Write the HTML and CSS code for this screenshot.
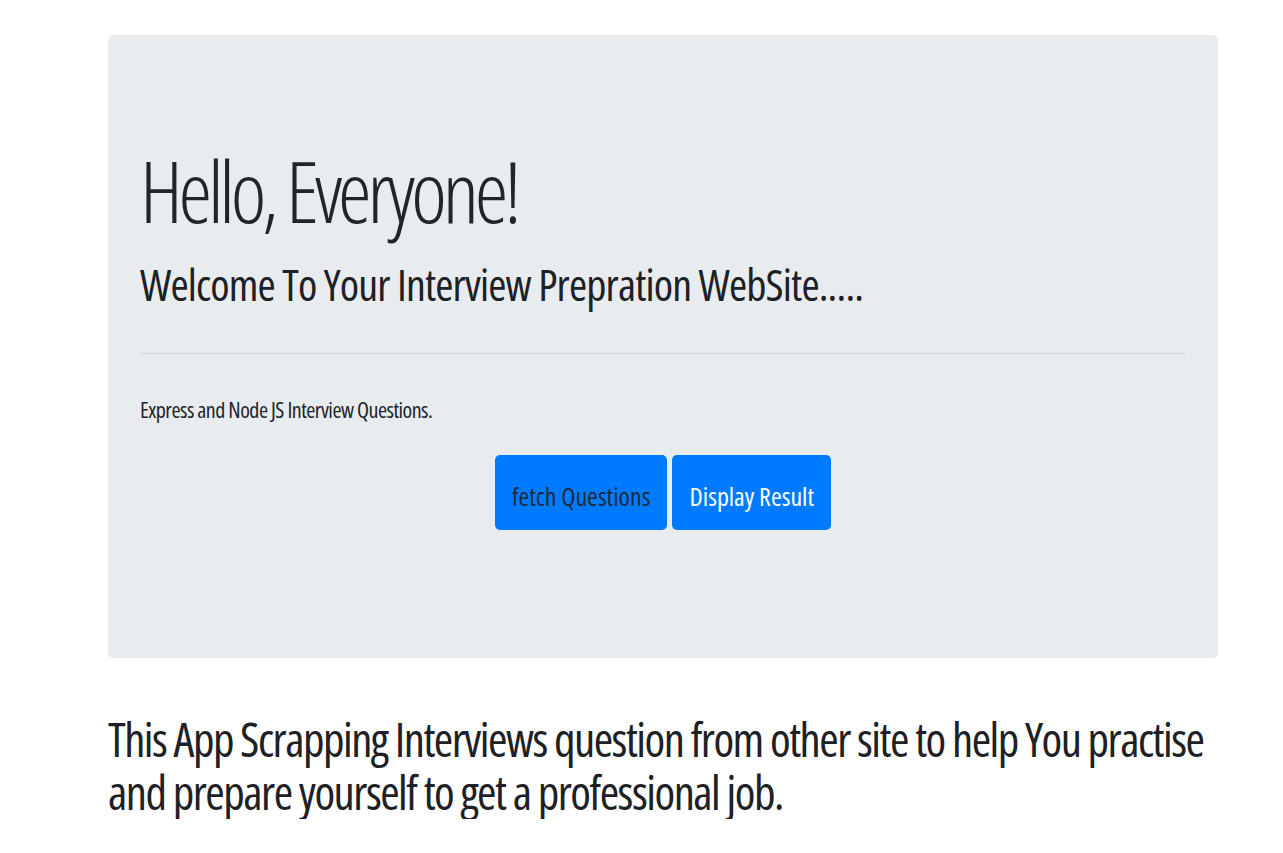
FILE: index.html
```html
<!DOCTYPE html>
<html lang="en">
<head>
<meta charset="utf-8">
<title>Interview Prepration</title>
<link rel="stylesheet" href="styles.css">
</head>
<body>
<div class="container">
  <div class="jumbotron">
    <h1 class="display">Hello, Everyone!</h1>
    <h2 class="welcome">Welcome To Your Interview Prepration WebSite.....</h2>
    <hr class="divider">
    <p class="intro">Express and Node JS Interview Questions.</p>
    <div class="actions">
      <button class="btn btn-fetch" type="button">fetch Questions</button>
      <button class="btn btn-display" type="button">Display Result</button>
    </div>
  </div>
  <p class="lead">This App Scrapping Interviews question from other site to help You practise and prepare yourself to get a professional job.</p>
</div>
</body>
</html>
```
FILE: styles.css
```css
html, body {
  margin: 0;
  padding: 0;
  background: #ffffff;
}

body {
  font-family: "Open Sans", "Noto Sans", sans-serif;
  font-stretch: 75%;
  color: #212529;
}

.container {
  width: 1110px;
  margin-left: 108px;
}

.jumbotron {
  margin-top: 35px;
  background: #e9ecef;
  border-radius: 5px;
  padding: 105px 32px 128px;
}

.display {
  margin: 0;
  font-size: 85px;
  font-weight: 300;
  line-height: 100px;
  letter-spacing: -4.2px;
  color: #212529;
}

.welcome {
  margin: 18px 0 0;
  font-size: 44px;
  font-weight: 500;
  line-height: 53px;
  letter-spacing: -0.85px;
  color: #1d2125;
}

.divider {
  margin: 42px 0 0;
  border: 0;
  border-top: 1px solid #d2d4d7;
  height: 0;
}

.intro {
  margin: 40px 0 0;
  font-size: 22px;
  line-height: 30px;
  letter-spacing: -0.52px;
  color: #212529;
}

.actions {
  margin-top: 31px;
  display: flex;
  justify-content: center;
  gap: 5px;
}

.btn {
  font-family: inherit;
  font-stretch: 75%;
  font-size: 26px;
  font-weight: 400;
  line-height: 36px;
  padding: 23px 17px 16px;
  border: 0;
  border-radius: 5px;
  background: #007bff;
  cursor: pointer;
}

.btn-fetch {
  color: #1e2a3a;
}

.btn-display {
  color: #ffffff;
}

.lead {
  margin: 55px 0 0;
  font-size: 47px;
  font-weight: 500;
  line-height: 53px;
  letter-spacing: -1.5px;
  color: #1d2125;
}
```
